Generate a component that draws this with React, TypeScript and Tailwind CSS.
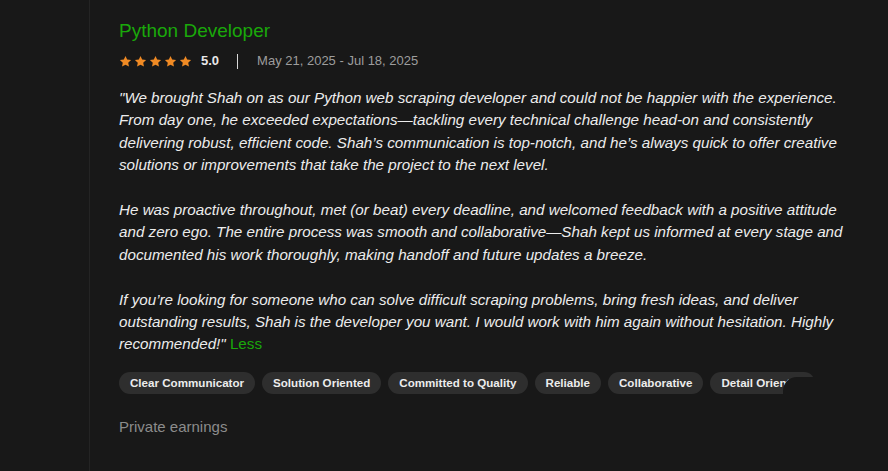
import { Fragment } from 'react';

const skills = [
  'Clear Communicator',
  'Solution Oriented',
  'Committed to Quality',
  'Reliable',
  'Collaborative',
  'Detail Oriented',
];

const paragraphs = [
  '"We brought Shah on as our Python web scraping developer and could not be happier with the experience. From day one, he exceeded expectations—tackling every technical challenge head-on and consistently delivering robust, efficient code. Shah’s communication is top-notch, and he’s always quick to offer creative solutions or improvements that take the project to the next level.',
  'He was proactive throughout, met (or beat) every deadline, and welcomed feedback with a positive attitude and zero ego. The entire process was smooth and collaborative—Shah kept us informed at every stage and documented his work thoroughly, making handoff and future updates a breeze.',
  'If you’re looking for someone who can solve difficult scraping problems, bring fresh ideas, and deliver outstanding results, Shah is the developer you want. I would work with him again without hesitation. Highly recommended!"',
];

function Star() {
  return (
    <svg viewBox="0 0 24 24" className="h-[13px] w-[13px]" fill="#f08a24">
      <path d="M12 1.8l3.1 6.6 7.2.9-5.3 5 1.4 7.1L12 17.9l-6.4 3.5 1.4-7.1-5.3-5 7.2-.9z" />
    </svg>
  );
}

export default function App() {
  return (
    <div
      className="h-[471px] w-[888px] overflow-hidden bg-[#181818] flex"
      style={{ fontFamily: '"Liberation Sans", Arial, sans-serif' }}
    >
      {/* left gutter */}
      <div className="w-[90px] shrink-0 border-r border-[#242424]" />

      <div className="flex-1 pl-[29px] pt-[19px]">
        <h2 className="text-[19px] leading-[24px] text-[#1aa80a]">Python Developer</h2>

        <div className="mt-[10px] flex items-center h-[16px]">
          <div className="flex gap-[2px]">
            {[0, 1, 2, 3, 4].map(i => (
              <Star key={i} />
            ))}
          </div>
          <span className="ml-[9px] text-[13px] font-bold text-[#e8e8e8]">5.0</span>
          <span className="ml-[18px] h-[15px] w-px bg-[#d8d8d8]" />
          <span className="ml-[19px] text-[13px] text-[#9d9d9d]">May 21, 2025 - Jul 18, 2025</span>
        </div>

        <div className="mt-[18px] w-[730px] text-[15.2px] leading-[22.4px] italic text-[#ececec]">
          {paragraphs.map((p, i) => (
            <Fragment key={i}>
              <p className={i > 0 ? 'mt-[22.4px]' : ''}>
                {p}
                {i === paragraphs.length - 1 && (
                  <span className="not-italic text-[#1aa80a]"> Less</span>
                )}
              </p>
            </Fragment>
          ))}
        </div>

        <div className="relative mt-[16px] flex gap-[7px] whitespace-nowrap">
          {skills.map(s => (
            <span
              key={s}
              className="h-[22px] px-[11px] flex items-center rounded-full bg-[#2e2e2e] text-[11.6px] font-bold text-[#ececec]"
            >
              {s}
            </span>
          ))}
          <div className="absolute left-[664px] top-[5px] h-[40px] w-[200px] rounded-tl-[14px] bg-[#181818]" />
        </div>

        <p className="mt-[22px] text-[15px] text-[#8c8c8c]">Private earnings</p>
      </div>
    </div>
  );
}
